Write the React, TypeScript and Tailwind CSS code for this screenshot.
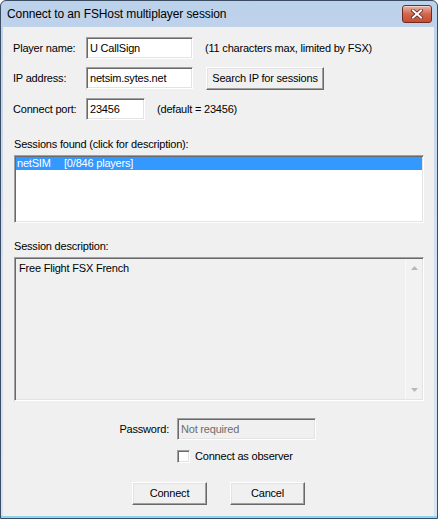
import React from 'react';

const sunken =
    'border border-t-[#a0a0a0] border-l-[#a0a0a0] border-r-white border-b-white shadow-[inset_1px_1px_0_#696969,inset_-1px_-1px_0_#e3e3e3]';
const raised =
    'border border-t-white border-l-white border-r-[#696969] border-b-[#696969] shadow-[inset_-1px_-1px_0_#a0a0a0,inset_1px_1px_0_#e3e3e3] bg-[#f0f0f0]';

function CloseButton() {
    return (
        <div className="w-[30px] h-[18px] rounded-[3px] border border-[#6b2c22] bg-gradient-to-b from-[#eab3a5] via-[#d2664f] to-[#c94b33] flex items-center justify-center shadow-[inset_0_1px_0_rgba(255,255,255,0.5)]">
            <svg width="12" height="10" viewBox="0 0 12 10">
                <path d="M2 1.5 L10 8.5 M10 1.5 L2 8.5" stroke="#5a2a22" strokeWidth="3.6" strokeLinecap="square" />
                <path d="M2 1.5 L10 8.5 M10 1.5 L2 8.5" stroke="#ffffff" strokeWidth="2" strokeLinecap="square" />
            </svg>
        </div>
    );
}

function TextBox({ value, width, muted }: { value: string; width: string; muted?: boolean }) {
    return (
        <div className={`${sunken} ${width} h-[22px] flex items-center px-[3px] ${muted ? 'bg-[#f0f0f0] text-[#6d6d6d]' : 'bg-white'}`}>
            {value}
        </div>
    );
}

export default function App() {
    return (
        <div className="w-[438px] h-[519px] font-['Liberation_Sans',Arial,sans-serif] text-[11px] leading-[13px] tracking-[-0.2px] text-black">
            <div className="w-full h-full rounded-t-[6px] border border-[#3a4d63] bg-gradient-to-b from-[#bcd1ea] via-[#d2e0f1] to-[#d6e3f2] flex flex-col overflow-hidden">
                {/* title bar */}
                <div className="h-[26px] shrink-0 flex items-start justify-between pl-[6px] pr-[5px] pt-[4px]">
                    <span className="text-[12px] tracking-[-0.1px] leading-[18px] text-black">Connect to an FSHost multiplayer session</span>
                    <CloseButton />
                </div>

                {/* client area */}
                <div className="flex-1 ml-[2px] mr-[3px] bg-[#f0f0f0] px-[10px] flex flex-col">
                    <div className="flex items-center mt-[10px]">
                        <span className="w-[73px]">Player name:</span>
                        <TextBox value="U CallSign" width="w-[107px]" />
                        <span className="ml-[12px]">(11 characters max, limited by FSX)</span>
                    </div>

                    <div className="flex items-start mt-[8px]">
                        <span className="w-[73px] h-[22px] flex items-center">IP address:</span>
                        <TextBox value="netsim.sytes.net" width="w-[107px]" />
                        <button className={`${raised} ml-[13px] w-[118px] h-[23px] flex items-center justify-center`}>
                            Search IP for sessions
                        </button>
                    </div>

                    <div className="flex items-center mt-[8px]">
                        <span className="w-[73px]">Connect port:</span>
                        <TextBox value="23456" width="w-[59px]" />
                        <span className="ml-[12px]">(default = 23456)</span>
                    </div>

                    <div className="mt-[18px] pl-[1px]">Sessions found (click for description):</div>
                    <div className={`${sunken} mt-[4px] ml-[1px] w-[410px] h-[68px] bg-white p-[1px]`}>
                        <div className="h-[13px] bg-[#3399ff] text-white flex items-center pl-[1px]">
                            <span className="w-[47px]">netSIM</span>
                            <span>[0/846 players]</span>
                        </div>
                    </div>

                    <div className="mt-[17px] pl-[1px]">Session description:</div>
                    <div className={`${sunken} mt-[4px] ml-[1px] w-[410px] h-[144px] bg-[#f0f0f0] flex p-[1px]`}>
                        <div className="flex-1 pl-[3px] pt-[3px]">Free Flight FSX French</div>
                        <div className="w-[17px] border-l border-[#fafafa] bg-[#f2f2f2] flex flex-col items-center justify-between py-[7px]">
                            <svg width="7" height="4" viewBox="0 0 7 4">
                                <path d="M0 4 L3.5 0 L7 4 Z" fill="#b8b8b8" />
                            </svg>
                            <svg width="7" height="4" viewBox="0 0 7 4">
                                <path d="M0 0 L3.5 4 L7 0 Z" fill="#b8b8b8" />
                            </svg>
                        </div>
                    </div>

                    <div className="flex items-center mt-[17px]">
                        <span className="w-[156px] text-right">Password:</span>
                        <div className="ml-[8px]">
                            <TextBox value="Not required" width="w-[139px]" muted />
                        </div>
                    </div>

                    <div className="flex items-center mt-[10px] ml-[164px]">
                        <div className={`${sunken} w-[13px] h-[13px] bg-white`} />
                        <span className="ml-[5px]">Connect as observer</span>
                    </div>

                    <div className="flex justify-center gap-[23px] mt-[19px]">
                        <button className={`${raised} w-[75px] h-[23px]`}>Connect</button>
                        <button className={`${raised} w-[75px] h-[23px]`}>Cancel</button>
                    </div>
                </div>
                <div className="h-[2px] shrink-0 bg-[#8ed3ef]" />
            </div>
        </div>
    );
}
